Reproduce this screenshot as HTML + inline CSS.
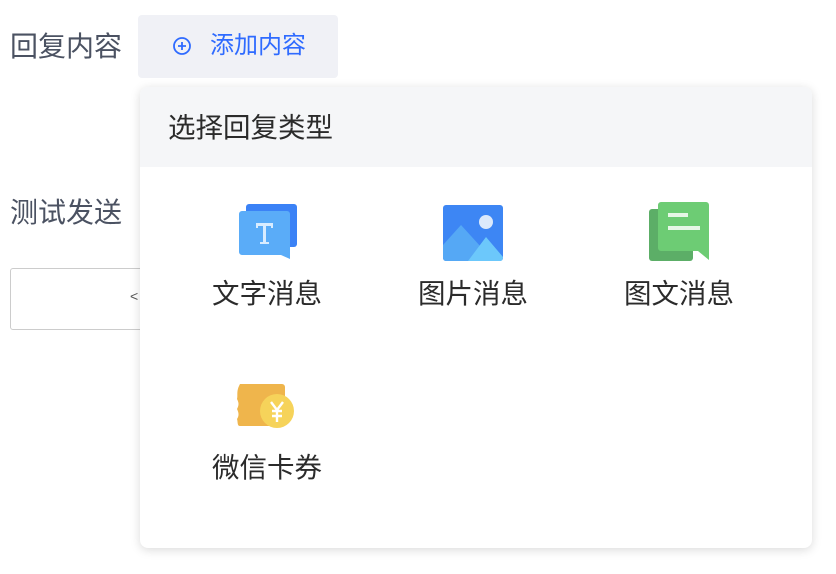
<!DOCTYPE html>
<html><head><meta charset="utf-8"><style>
body{margin:0;width:836px;height:574px;background:#fff;position:relative;overflow:hidden;font-family:"Liberation Sans","Noto Sans CJK SC",sans-serif}
.a{position:absolute;white-space:nowrap}
.lbl{font-size:28px;color:#4b5262;line-height:32px}
.btn{left:138px;top:15px;width:200px;height:63px;background:#f0f1f6;border-radius:4px}
.pop{left:140px;top:87px;width:672px;height:461px;background:#fff;border-radius:8px;box-shadow:0 2px 10px rgba(0,0,0,.15);overflow:hidden}
.hd{position:absolute;left:0;top:0;width:672px;height:80px;background:#f5f6f8}
.it{font-size:27.5px;color:#2b2b2b;line-height:32px;width:160px;text-align:center}
</style></head><body>
<div class="a lbl" style="left:10px;top:31px">回复内容</div>
<div class="a btn"></div>
<svg class="a" style="left:172px;top:36px" width="20" height="20" viewBox="0 0 20 20"><circle cx="10" cy="10" r="8" fill="none" stroke="#2f6bff" stroke-width="1.8"/><path d="M10 6v8M6 10h8" stroke="#2f6bff" stroke-width="1.8"/></svg>
<div class="a" style="left:210px;top:30px;font-size:24px;color:#2f6bff;line-height:32px">添加内容</div>
<div class="a lbl" style="left:10px;top:197px">测试发送</div>
<div class="a" style="left:10px;top:268px;width:140px;height:60px;border:1px solid #ccc;border-radius:3px"></div>
<div class="a" style="left:130px;top:288px;font-size:14px;color:#555">&lt;</div>
<div class="a pop"><div class="hd"></div>
<div class="a" style="left:28px;top:25px;font-size:27.5px;color:#2b2b2b;line-height:32px">选择回复类型</div>
<svg class="a" style="left:98px;top:116px" width="62" height="60" viewBox="0 0 62 60"><rect x="8" y="1" width="51" height="43" rx="3" fill="#3b82f6"/><path d="M4 8h45a3 3 0 0 1 3 3v45l-9-4H4a3 3 0 0 1-3-3V11a3 3 0 0 1 3-3z" fill="#5aacf8"/><path d="M18 20h17v5h-2v-2h-5v16h3v2h-9v-2h3V23h-5v2h-2z" fill="#d8ecff"/></svg>
<div class="a it" style="left:47px;top:191px">文字消息</div>
<svg class="a" style="left:303px;top:118px" width="60" height="58" viewBox="0 0 60 58"><rect x="0" y="0" width="60" height="56" rx="3" fill="#3d86f4"/><path d="M0 40l18-20 20 22 0 14H3a3 3 0 0 1-3-3z" fill="#55a8f5"/><path d="M25 56l18-24 17 20v1a3 3 0 0 1-3 3z" fill="#6cc8fb"/><circle cx="43" cy="17" r="7" fill="#dbe9fb"/></svg>
<div class="a it" style="left:253px;top:191px">图片消息</div>
<svg class="a" style="left:509px;top:114px" width="62" height="62" viewBox="0 0 62 62"><rect x="0" y="8" width="44" height="52" rx="3" fill="#5cae67"/><path d="M12 1h45a3 3 0 0 1 3 3v55l-11-9H12a3 3 0 0 1-3-3V4a3 3 0 0 1 3-3z" fill="#6dcc74"/><rect x="19" y="12" width="20" height="4" fill="#e6f7e6"/><rect x="19" y="25" width="32" height="4" fill="#e6f7e6"/></svg>
<div class="a it" style="left:459px;top:191px">图文消息</div>
<svg class="a" style="left:96px;top:295px" width="60" height="50" viewBox="0 0 60 50"><path d="M4 2h42a3 3 0 0 1 3 3v36a3 3 0 0 1-3 3H4c-3 0-2-4-3-7 2-3 2-6 0-10 2-4 2-6 0-10 1-4-1-8 3-15z" fill="#efb54c"/><circle cx="41" cy="29" r="17" fill="#f6d35a"/><path d="M35 20l6 8 6-8M36 29h10M36 34h10M41 28v12" stroke="#fff" stroke-width="2.4" fill="none"/></svg>
<div class="a it" style="left:47px;top:365px">微信卡券</div>
</div>
</body></html>
